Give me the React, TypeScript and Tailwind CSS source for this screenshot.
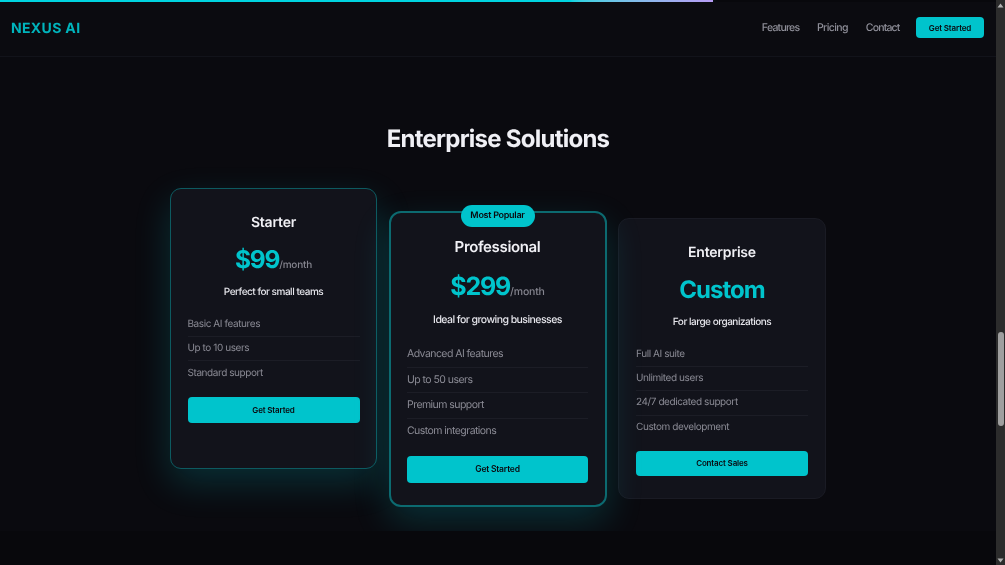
import React from "react"

type Plan = {
  name: string
  price: string
  per?: string
  blurb: string
  features: string[]
  cta: string
}

const plans: Plan[] = [
  { name: "Starter", price: "$99", per: "/month", blurb: "Perfect for small teams", features: ["Basic AI features", "Up to 10 users", "Standard support"], cta: "Get Started" },
  { name: "Professional", price: "$299", per: "/month", blurb: "Ideal for growing businesses", features: ["Advanced AI features", "Up to 50 users", "Premium support", "Custom integrations"], cta: "Get Started" },
  { name: "Enterprise", price: "Custom", blurb: "For large organizations", features: ["Full AI suite", "Unlimited users", "24/7 dedicated support", "Custom development"], cta: "Contact Sales" },
]

function Scrollbar() {
  return (
    <div className="w-[9px] shrink-0 h-full bg-[#2c2c2c] flex flex-col items-center justify-between pt-[3px] pb-[2px]">
      <svg width="7" height="5" viewBox="0 0 7 5"><path d="M3.5 0.5L6.5 4.5H0.5z" fill="#b0b0b0" /></svg>
      <div className="w-[6px] h-[94px] rounded-[3px] bg-[#9f9f9f] mt-[324px] mb-auto" />
      <svg width="7" height="5" viewBox="0 0 7 5"><path d="M3.5 4.5L6.5 0.5H0.5z" fill="#b0b0b0" /></svg>
    </div>
  )
}

function Starter({ plan }: { plan: Plan }) {
  return (
    <div className="w-[207px] h-[281px] shrink-0 rounded-[11px] border border-[#0d5a60] bg-[#12131b] px-[16.5px] pt-[25px] shadow-[0_14px_36px_rgba(0,196,204,0.2)]">
      <h3 className="text-center text-[14px] leading-[18px] font-semibold tracking-[-0.2px] text-[#f0f0f5]">{plan.name}</h3>
      <div className="text-center mt-[10px] leading-[34px] text-[#00c4cc]">
        <span className="text-[24.5px] font-bold tracking-[-1.2px]">{plan.price}</span>
        <span className="text-[10px] font-medium tracking-[-0.2px] text-[#85858f]">{plan.per}</span>
      </div>
      <p className="text-center text-[10px] leading-[14px] mt-[3px] font-medium tracking-[-0.48px] text-[#e6e6ec]">{plan.blurb}</p>
      <ul className="mt-[14px]">
        {plan.features.map((f, i) => (
          <li key={f} className={`h-[24px] flex items-center text-[10px] tracking-[-0.42px] text-[#8a8a94] ${i < plan.features.length - 1 ? "border-b border-[#1c1d26]" : ""}`}>{f}</li>
        ))}
      </ul>
      <button className="mt-[12px] w-full h-[26px] rounded-[4px] bg-[#00c4cc] text-[8px] font-semibold tracking-[-0.15px] text-[#0a0a0f]">{plan.cta}</button>
    </div>
  )
}

function Professional({ plan }: { plan: Plan }) {
  return (
    <div className="relative w-[218px] h-[296px] mt-[23px] shrink-0 rounded-[12px] border-2 border-[#0c6a70] bg-[#12131b] px-[16.5px] pt-[24px] shadow-[0_14px_36px_rgba(0,196,204,0.2)]">
      <span className="absolute -top-[8px] left-1/2 -translate-x-1/2 h-[22px] w-[74px] flex items-center justify-center rounded-full bg-[#00c4cc] text-[9px] font-semibold tracking-[-0.28px] text-[#0a0a0f]">Most Popular</span>
      <h3 className="text-center text-[15px] leading-[19px] font-semibold tracking-[-0.35px] text-[#f0f0f5]">{plan.name}</h3>
      <div className="text-center mt-[13px] leading-[36px] text-[#00c4cc]">
        <span className="text-[25px] font-bold tracking-[-1.2px]">{plan.price}</span>
        <span className="text-[10.5px] font-medium tracking-[-0.2px] text-[#85858f]">{plan.per}</span>
      </div>
      <p className="text-center text-[10.5px] leading-[14px] mt-[3px] font-medium tracking-[-0.55px] text-[#e6e6ec]">{plan.blurb}</p>
      <ul className="mt-[15px]">
        {plan.features.map((f, i) => (
          <li key={f} className={`h-[25.5px] flex items-center text-[10.5px] tracking-[-0.55px] text-[#8a8a94] ${i < plan.features.length - 1 ? "border-b border-[#1c1d26]" : ""}`}>{f}</li>
        ))}
      </ul>
      <button className="mt-[12px] w-full h-[27px] rounded-[4px] bg-[#00c4cc] text-[8.5px] font-semibold tracking-[-0.2px] text-[#0a0a0f]">{plan.cta}</button>
    </div>
  )
}

function EnterprisePlan({ plan }: { plan: Plan }) {
  return (
    <div className="w-[208px] h-[281px] mt-[30px] shrink-0 rounded-[11px] border border-[#1a1b24] bg-[#12131b] px-[17px] pt-[25px]">
      <h3 className="text-center text-[14px] leading-[18px] font-semibold tracking-[-0.2px] text-[#f0f0f5]">{plan.name}</h3>
      <div className="text-center mt-[10.5px] leading-[34px] text-[24px] font-bold tracking-[-1px] text-[#00c4cc]">{plan.price}</div>
      <p className="text-center text-[10px] leading-[14px] mt-[8px] font-medium tracking-[-0.48px] text-[#e6e6ec]">{plan.blurb}</p>
      <ul className="mt-[14px]">
        {plan.features.map((f, i) => (
          <li key={f} className={`h-[24.4px] flex items-center text-[10px] tracking-[-0.42px] text-[#8a8a94] ${i < plan.features.length - 1 ? "border-b border-[#1c1d26]" : ""}`}>{f}</li>
        ))}
      </ul>
      <button className="mt-[10.5px] w-full h-[25px] rounded-[4px] bg-[#00c4cc] text-[8px] font-semibold tracking-[-0.15px] text-[#0a0a0f]">{plan.cta}</button>
    </div>
  )
}

export default function App() {
  return (
    <div className="h-[565px] w-full overflow-hidden flex bg-[#08080c] font-['Inter',sans-serif] [text-rendering:geometricPrecision] blur-[0.35px]">
      <div className="flex-1 min-w-0 flex flex-col">
        <div className="h-[2px] w-[713px] bg-gradient-to-r from-[#00d4e0] from-80% to-[#b79cf5] shadow-[0_1px_6px_rgba(0,212,224,0.4)]" />
        <header className="h-[55px] flex items-center justify-between pl-[11px] pr-[12px] pb-[3px] border-b border-[#12131a] bg-[#0b0b10]">
          <div className="pt-[1px] text-[14px] font-bold tracking-[0.35px] text-[#00b4bc]">NEXUS AI</div>
          <nav className="flex items-center">
            <a className="pt-[1px] text-[10.5px] font-medium tracking-[-0.75px] text-[#8f8f99]">Features</a>
            <a className="ml-[17.5px] pt-[1px] text-[10.5px] font-medium tracking-[-0.6px] text-[#8f8f99]">Pricing</a>
            <a className="ml-[18px] pt-[1px] text-[10.5px] font-medium tracking-[-0.85px] text-[#8f8f99]">Contact</a>
            <button className="ml-[16.5px] h-[20.5px] w-[68px] rounded-[4px] bg-[#00c4cc] text-[8px] font-semibold tracking-[-0.15px] text-[#0a0a0f]">Get Started</button>
          </nav>
        </header>
        <section className="h-[474px] shrink-0 overflow-hidden bg-[#0a0a0f]">
          <h2 className="text-center text-[24px] leading-[30px] font-bold tracking-[-0.75px] text-[#f0f0f5] mt-[67px]">Enterprise Solutions</h2>
          <div className="mt-[34px] flex justify-center items-start gap-[11.5px]">
            <Starter plan={plans[0]} />
            <Professional plan={plans[1]} />
            <EnterprisePlan plan={plans[2]} />
          </div>
        </section>
      </div>
      <Scrollbar />
    </div>
  )
}
